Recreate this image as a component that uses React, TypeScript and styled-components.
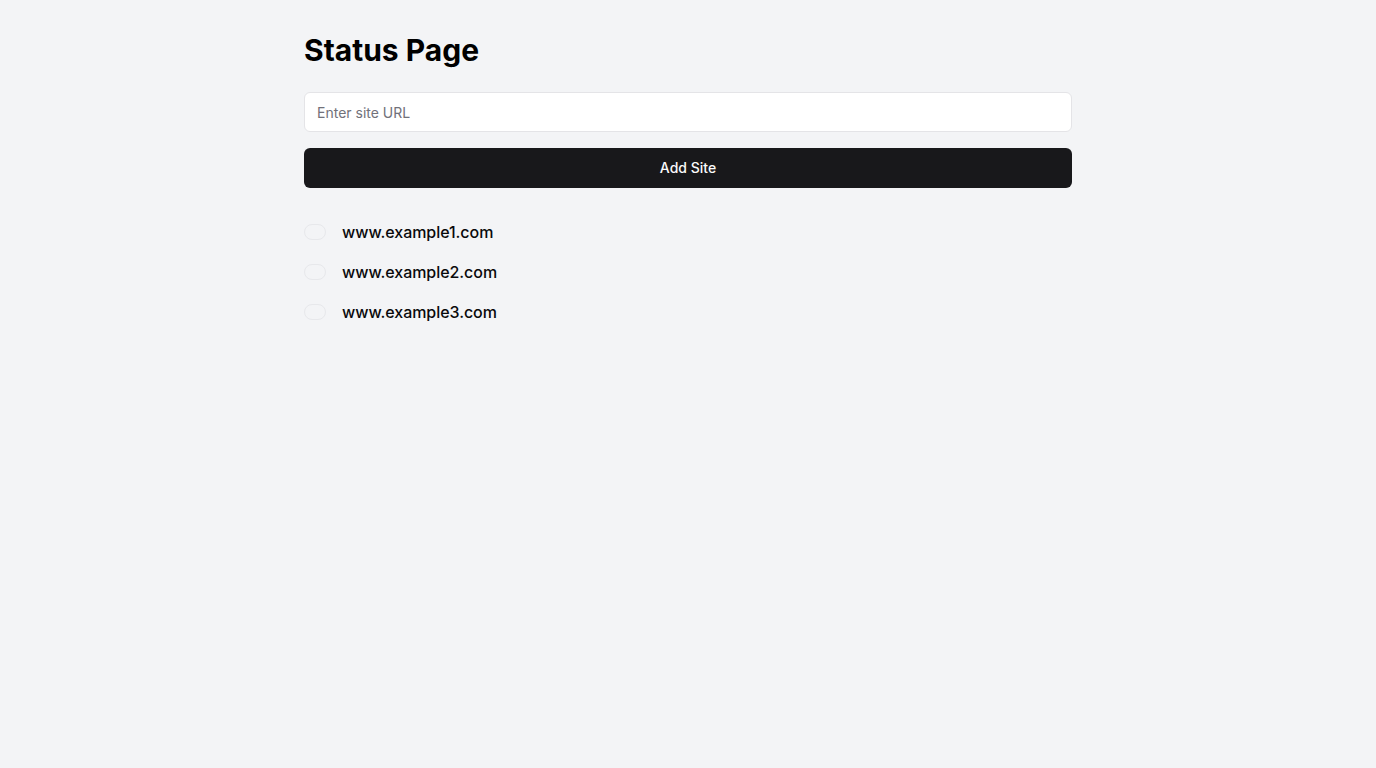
import React from "react";
import styled, { createGlobalStyle } from "styled-components";

const Global = createGlobalStyle`
  html, body { margin: 0; padding: 0; background: #f3f4f6; }
  body { font-family: Inter, "Noto Sans", sans-serif; color: #09090b; }
  * { box-sizing: border-box; }
`;

const Page = styled.main`
  max-width: 768px;
  margin: 0 auto;
  padding-top: 32px;
  display: flex;
  flex-direction: column;
`;

const Title = styled.h1`
  margin: 0 0 24px;
  font-size: 30px;
  line-height: 36px;
  font-weight: 700;
  color: #000;
`;

const Input = styled.input`
  height: 40px;
  width: 100%;
  border: 1px solid #e4e4e7;
  border-radius: 6px;
  background: #fff;
  padding: 0 12px;
  font-family: Inter, sans-serif;
  font-size: 14px;
  color: #09090b;
  outline: none;
  &::placeholder { color: #71717a; }
`;

const Button = styled.button`
  margin-top: 16px;
  height: 40px;
  width: 100%;
  border: none;
  border-radius: 6px;
  background: #18181b;
  color: #fafafa;
  padding: 0 0 2px;
  font-family: Inter, sans-serif;
  font-size: 14px;
  font-weight: 500;
  cursor: pointer;
`;

const List = styled.ul`
  list-style: none;
  margin: 24px 0 0;
  padding: 0;
  display: flex;
  flex-direction: column;
`;

const Row = styled.li`
  height: 40px;
  display: flex;
  align-items: center;
  gap: 16px;
`;

const Toggle = styled.span`
  width: 22px;
  height: 16px;
  border-radius: 9999px;
  border: 1px solid #e7e8eb;
  background: #f3f4f6;
  flex-shrink: 0;
`;

const Site = styled.span`
  font-size: 16px;
  font-weight: 500;
  letter-spacing: -0.05px;
  color: #09090b;
`;

const sites = ["www.example1.com", "www.example2.com", "www.example3.com"];

export default function App() {
  return (
    <>
      <Global />
      <Page>
        <Title>Status Page</Title>
        <Input placeholder="Enter site URL" />
        <Button>Add Site</Button>
        <List>
          {sites.map((s) => (
            <Row key={s}>
              <Toggle />
              <Site>{s}</Site>
            </Row>
          ))}
        </List>
      </Page>
    </>
  );
}
